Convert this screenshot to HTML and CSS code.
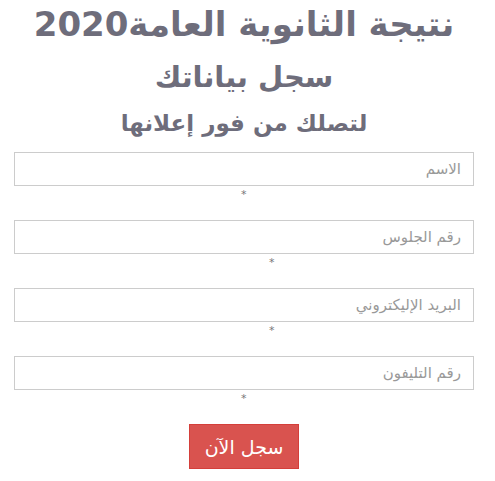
FILE: index.html
```html
<!DOCTYPE html>
<html lang="ar" dir="rtl">
<head>
<meta charset="utf-8">
<link rel="stylesheet" href="styles.css">
</head>
<body>
<div class="page">
  <h1 class="title">نتيجة الثانوية العامة2020</h1>
  <h2 class="subtitle">سجل بياناتك</h2>
  <h3 class="tagline">لتصلك من فور إعلانها</h3>
  <form class="form">
    <div class="field">
      <input class="input" type="text" placeholder="الاسم">
      <div class="req req-a">*</div>
    </div>
    <div class="field">
      <input class="input" type="text" placeholder="رقم الجلوس">
      <div class="req req-b">*</div>
    </div>
    <div class="field">
      <input class="input" type="text" placeholder="البريد الإليكتروني">
      <div class="req req-b">*</div>
    </div>
    <div class="field">
      <input class="input" type="text" placeholder="رقم التليفون">
      <div class="req req-a">*</div>
    </div>
    <div class="actions">
      <button class="btn" type="button">سجل الآن</button>
    </div>
  </form>
</div>
</body>
</html>
```
FILE: styles.css
```css
* { box-sizing: border-box; }
html, body { margin: 0; padding: 0; background: #fff; }
body { font-family: "DejaVu Sans", sans-serif; }
.page {
  width: 460px;
  margin: 0 21px 0 14px;
  padding-top: 3px;
}
.title, .subtitle, .tagline {
  margin: 0;
  text-align: center;
  color: #6e6d7b;
  font-weight: bold;
}
.title { font-size: 34px; line-height: 42px; }
.subtitle { font-size: 29px; line-height: 40px; margin-top: 12px; }
.tagline { font-size: 23px; line-height: 34px; margin-top: 9px; }
.form { margin-top: 12px; }
.field { height: 68px; }
.input {
  display: block;
  width: 100%;
  height: 34px;
  border: 1px solid #cccccc;
  padding: 0 12px;
  font-family: "DejaVu Sans", sans-serif;
  font-size: 15px;
  color: #555;
  outline: none;
}
.input::placeholder { color: #999; }
.req {
  margin-top: 2px;
  font-size: 11px;
  color: #777;
  line-height: 14px;
  text-align: left;
}
.req-a { padding-left: 227px; }
.req-b { padding-left: 255px; }
.actions { display: flex; justify-content: center; }
.btn {
  width: 110px;
  height: 45px;
  background: #d9534f;
  border: 1px solid #d43f3a;
  color: #fff;
  font-family: "DejaVu Sans", sans-serif;
  font-size: 19px;
  padding: 0;
}
```
